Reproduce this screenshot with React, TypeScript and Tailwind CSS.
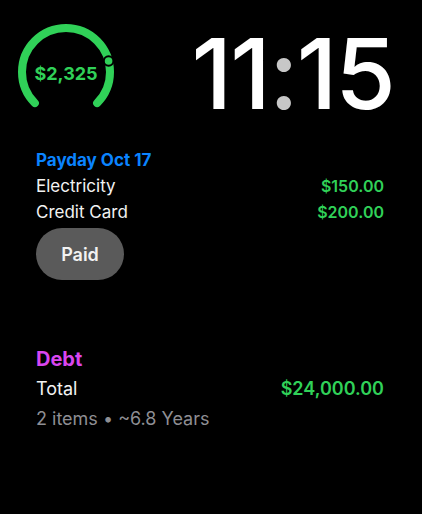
import React from 'react'

const bills = [
  { name: 'Electricity', amount: '$150.00' },
  { name: 'Credit Card', amount: '$200.00' },
]

function BudgetGauge() {
  return (
    <div className="relative h-[100px] w-[100px]">
      <svg width="100" height="100" viewBox="0 0 100 100" className="block">
        <path
          d="M 18.89 81.11 A 44 44 0 1 1 81.11 81.11"
          fill="none"
          stroke="#30d158"
          strokeWidth="8"
          strokeLinecap="round"
        />
        <circle cx="92.6" cy="39" r="4.8" fill="#30d158" stroke="#000" strokeWidth="2" />
      </svg>
      <div className="absolute inset-0 flex items-center justify-center pt-[2px] text-[18px] font-bold text-[#30d158]">
        $2,325
      </div>
    </div>
  )
}

export default function App() {
  return (
    <div className="h-screen w-full overflow-hidden bg-black font-['Inter',sans-serif]">
      {/* Top: gauge + clock */}
      <div className="flex items-start justify-between pl-4 pr-[28px] pt-[22px]">
        <BudgetGauge />
        <div className="mt-[3px] text-[98px] font-medium leading-none tracking-[-0.02em] text-white">
          11<span className="text-[#c7c7c7]">:</span>15
        </div>
      </div>

      {/* Payday */}
      <div className="mt-[24px] pl-[36px] pr-[38px]">
        <div className="text-[17px] font-bold leading-[26px] text-[#0a84ff]">Payday Oct 17</div>
        {bills.map(({ name, amount }) => (
          <div key={name} className="flex items-baseline justify-between leading-[26px]">
            <span className="text-[17px] text-[#f2f2f2]">{name}</span>
            <span className="text-[16px] font-semibold text-[#30d158]">{amount}</span>
          </div>
        ))}
        <button className="mt-[3px] flex h-[52px] w-[88px] items-center justify-center rounded-full bg-[#5a5a5a] text-[18px] font-semibold text-[#f2f2f2]">
          Paid
        </button>
      </div>

      {/* Debt */}
      <div className="mt-[64px] pl-[36px] pr-[38px]">
        <div className="text-[20px] font-bold leading-[30px] text-[#d946ef]">Debt</div>
        <div className="flex items-baseline justify-between leading-[30px]">
          <span className="text-[18px] text-[#f2f2f2]">Total</span>
          <span className="text-[18px] font-semibold text-[#30d158]">$24,000.00</span>
        </div>
        <div className="text-[18px] leading-[30px] text-[#8e8e93]">2 items • ~6.8 Years</div>
      </div>
    </div>
  )
}
